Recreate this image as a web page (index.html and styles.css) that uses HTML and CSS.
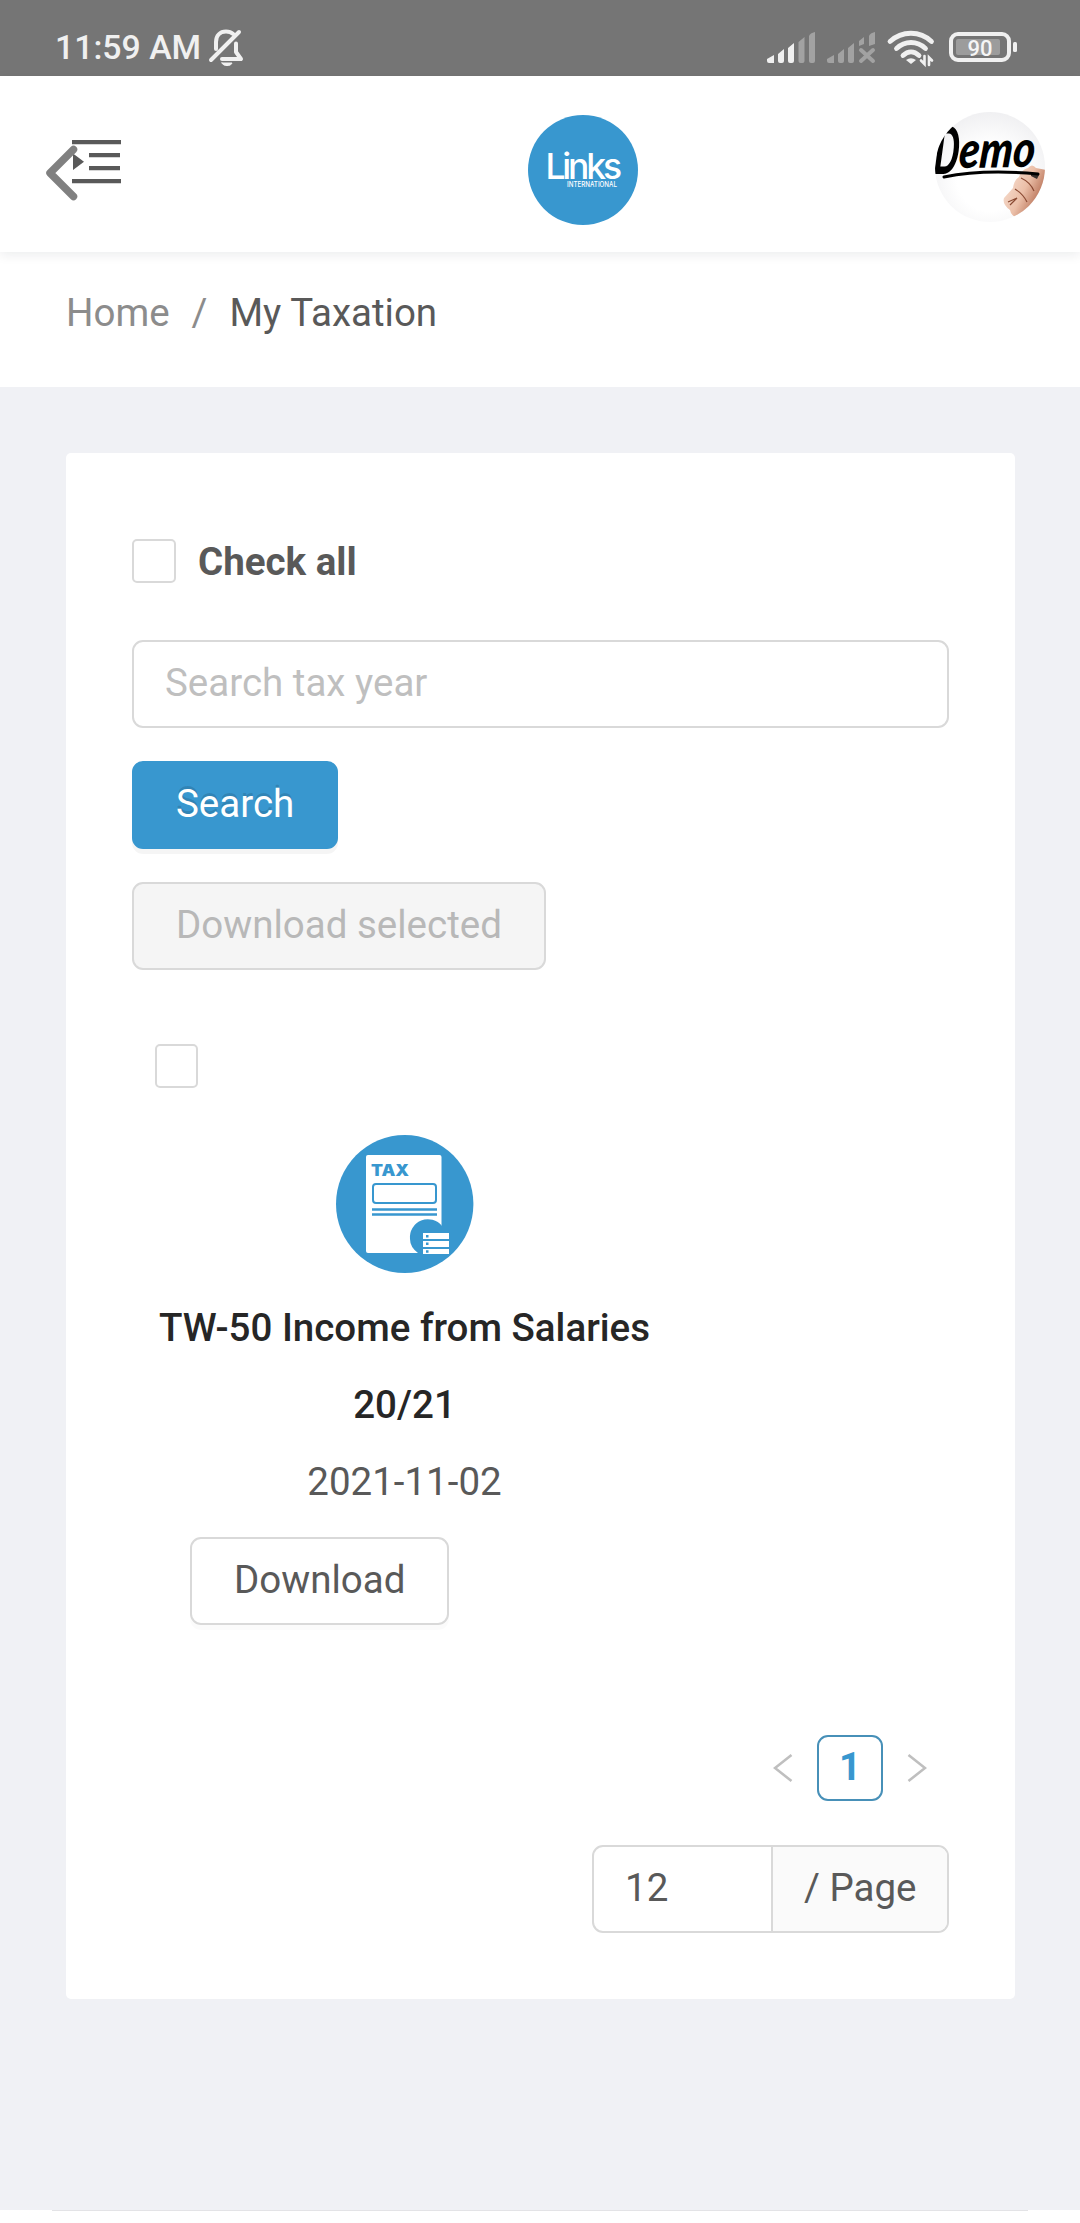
FILE: index.html
```html
<!DOCTYPE html>
<html lang="en">
<head>
<meta charset="utf-8">
<title>My Taxation</title>
<link rel="stylesheet" href="styles.css">
</head>
<body>
<div class="status-bar">
  <span class="clock">11:59 AM</span>
  <svg class="bell" width="36" height="40" viewBox="0 0 36 40" fill="none" stroke="#f0f0f0" stroke-width="4" stroke-linecap="round" stroke-linejoin="round">
    <path d="M8 21V14C8 7.500 12 3.500 18 3.500C21 3.500 23.500 4.500 25.200 6M3 32L31 4M28 15.500V24L33 31H14"/>
    <path d="M14 35H24C23 38.500 15 38.500 14 35Z" fill="#f0f0f0" stroke-width="1"/>
  </svg>
  <svg class="signals" width="252" height="40" viewBox="765 28 252 40">
    <g fill="#f0f0f0">
      <path d="M767 59l7-4v8h-5q-2 0-2-2zM778 54l6-5v12q0 2-2 2h-2q-2 0-2-2zM788 48l6-5v18q0 2-2 2h-2q-2 0-2-2z"/>
    </g>
    <g fill="#a2a2a2">
      <path d="M798.500 42l6-5v24q0 2-2 2h-2q-2 0-2-2zM809 36q1-3 6-4v29q0 2-2 2h-2q-2 0-2-2z"/>
      <path d="M827 59l7-4v8h-5q-2 0-2-2zM838 54l6-5v12q0 2-2 2h-2q-2 0-2-2zM848 48l6-5v18q0 2-2 2h-2q-2 0-2-2zM859 41l5-4v7l-5 2zM869 36q1-3 6-4v12l-6 2z"/>
      <path d="M861 50l12 11M873 50l-12 11" stroke="#a2a2a2" stroke-width="4" stroke-linecap="round"/>
    </g>
    <g fill="none" stroke="#f0f0f0" stroke-width="4.800" stroke-linecap="round">
      <path d="M890 41.500C902 30.500 920 30.500 931.500 41.500M896.500 48.500C905 40.500 917 40.500 925.500 48.500M903 55.500C908 50.700 914 50.700 919 55.500"/>
      <path d="M906 60Q911 56.500 916 60L911 64Z" fill="#f0f0f0" stroke="none"/>
      <path d="M924.500 56v8l-3.500-3.500M929 65v-7.500l3 3" stroke-width="2.600"/>
    </g>
    <rect x="951" y="34" width="58" height="26" rx="7" fill="none" stroke="#f0f0f0" stroke-width="4"/>
    <rect x="956" y="39" width="44" height="16" rx="2" fill="#9c9c9c"/>
    <rect x="1013" y="42" width="4" height="10" rx="1.500" fill="#f0f0f0"/>
    <text class="battery-level" x="980" y="55.500" text-anchor="middle">90</text>
  </svg>
</div>

<header class="header">
  <svg class="menu-icon" width="78" height="64" viewBox="44 138 78 64">
    <path d="M72 140h49v4.300H72zM89 153h31v4.300H89zM89 166h31v4.300H89zM72 179h49v4.300H72zM73 153.500l11 8.200-11 8.300z" fill="#595959"/>
    <path d="M73.500 149.500L50 173l23.500 23.500" fill="none" stroke="#808080" stroke-width="7.500" stroke-linecap="round" stroke-linejoin="round"/>
  </svg>
  <svg class="logo" width="110" height="110" viewBox="528 115 110 110">
    <circle cx="583" cy="170" r="55" fill="#3897cf"/>
    <text class="logo-name" x="545.500" y="179">Links</text>
    <text class="logo-sub" x="567" y="187" textLength="50" lengthAdjust="spacingAndGlyphs">INTERNATIONAL</text>
  </svg>
  <svg class="avatar" width="110" height="110" viewBox="0 0 110 110">
    <defs>
      <radialGradient id="paper" cx=".5" cy=".6" r=".6"><stop offset=".5" stop-color="#fff"/><stop offset="1" stop-color="#f0f0f2"/></radialGradient>
      <linearGradient id="skin" x1="0" y1="0" x2="1" y2=".6"><stop offset="0" stop-color="#fbe9de"/><stop offset=".55" stop-color="#ebbfa8"/><stop offset="1" stop-color="#a85a3e"/></linearGradient>
      <clipPath id="round"><circle cx="55" cy="55" r="55"/></clipPath>
    </defs>
    <g clip-path="url(#round)">
      <rect width="110" height="110" fill="url(#paper)"/>
      <path d="M93 56Q97 51 101 56L112 58V88L84 107Q76 104 75 98Q67 92 69 86L78 76Q79 68 84 65Q86 58 93 56Z" fill="url(#skin)"/>
      <path d="M73 90l9-4-7 7M86 66q9 4 13 13M80 77q8 5 12 13" fill="none" stroke="#8a4a33" stroke-width="1.200"/>
      <path d="M96 61l8 2-2 4-6-3z" fill="#38302d"/>
      <path d="M9 65Q48 57 103 62" fill="none" stroke="#000" stroke-width="3" stroke-linecap="round"/>
      <text class="demo-initial" transform="translate(-2 62) skewX(-4)" textLength="25" lengthAdjust="spacingAndGlyphs">D</text>
      <text class="demo-rest" transform="translate(23 56) rotate(-1) skewX(-6)" textLength="76" lengthAdjust="spacingAndGlyphs">emo</text>
    </g>
  </svg>
</header>

<nav class="breadcrumb">
  <span>Home</span><span class="separator">/</span><span class="current">My Taxation</span>
</nav>

<main class="content">
  <section class="card">
    <label class="check-all"><span class="checkbox"></span>Check all</label>
    <div class="search-input">Search tax year</div>
    <div class="btn btn-primary">Search</div>
    <div class="btn btn-disabled">Download selected</div>

    <article class="item">
      <span class="checkbox"></span>
      <svg class="tax-icon" width="138" height="138" viewBox="0 0 138 138">
        <ellipse cx="68.700" cy="69" rx="68.700" ry="69" fill="#3897cf"/>
        <rect x="30" y="20" width="75.500" height="98" rx="2" fill="#fff"/>
        <text class="tax-label" x="35" y="41" textLength="38" lengthAdjust="spacingAndGlyphs">TAX</text>
        <rect x="37" y="49" width="63" height="19" rx="3" fill="none" stroke="#3897cf" stroke-width="2"/>
        <path d="M36 74.500h65M36 79.500h65" stroke="#3897cf" stroke-width="2.400"/>
        <path d="M82 118Q74 112 74 104A18 18 0 0 1 106 91V119Z" fill="#3897cf"/>
        <path d="M87 98h26v6H87zM87 106h26v6H87zM87 114h26v5H87z" fill="#fff"/>
        <path d="M90 100h2.500v2.500H90zM90 107.500h2.500v2.500H90zM90 115.200h2.500v2.500H90z" fill="#3897cf"/>
      </svg>
      <div class="item-title">TW-50 Income from Salaries</div>
      <div class="item-year">20/21</div>
      <div class="item-date">2021-11-02</div>
      <div class="btn btn-download">Download</div>
    </article>

    <div class="pagination">
      <svg width="20" height="30" viewBox="0 0 20 30"><path d="M18.500 2L2 15l16.500 13" fill="none" stroke="#bfbfbf" stroke-width="2.600"/></svg>
      <span class="page-number">1</span>
      <svg width="20" height="30" viewBox="0 0 20 30"><path d="M1.500 2L18 15L1.500 28" fill="none" stroke="#bfbfbf" stroke-width="2.600"/></svg>
    </div>
    <div class="page-size">
      <span class="size-value">12</span><span class="size-unit">/ Page</span>
    </div>
  </section>
</main>
<footer class="home-edge"></footer>
</body>
</html>
```
FILE: styles.css
```css
* { box-sizing: border-box; }
body {
  margin: 0;
  height: 2223px;
  display: flex;
  flex-direction: column;
  background: #fff;
  color: #595959;
  font-family: Roboto, "Liberation Sans", sans-serif;
  font-size: 38.5px;
  line-height: 60px;
  white-space: nowrap;
  overflow: hidden;
}
svg { display: block; flex: none; }

.status-bar {
  flex: none;
  height: 76px;
  display: flex;
  align-items: flex-start;
  padding: 28px 63px 0 55px;
  background: #757575;
}
.clock { color: #f0f0f0; font-size: 33.8px; line-height: 40px; font-weight: 500; }
.bell { margin-left: 7px; }
.signals { margin-left: auto; }
.battery-level { font-size: 22px; font-weight: 500; fill: #f5f5f5; }

.header {
  flex: none;
  height: 176px;
  display: flex;
  justify-content: space-between;
  align-items: flex-start;
  padding: 36px 35px 0 44px;
  box-shadow: 0 3px 11px rgba(0, 21, 41, .08);
}
.menu-icon { margin-top: 26px; }
.logo { margin: 3px 0 0 109px; }
.logo-name { font: 500 35.5px Inter, sans-serif; letter-spacing: -3.2px; fill: #fff; }
.logo-sub { font: 500 7px Inter, sans-serif; fill: #fff; }
.demo-initial, .demo-rest { font-family: Lato, sans-serif; font-weight: 900; font-style: italic; fill: #000; }
.demo-initial { font-size: 66px; }
.demo-rest { font-size: 51px; }

.breadcrumb {
  flex: none;
  height: 135px;
  display: flex;
  padding: 31px 66px 0;
  color: #8c8c8c;
}
.separator { margin: 0 22px; }
.current { color: #595959; }

.content { flex: none; height: 1823px; padding: 66px 65px 0 66px; background: #f0f1f5; }
.card {
  height: 1546px;
  display: flex;
  flex-direction: column;
  align-items: flex-start;
  padding: 79px 66px 66px;
  background: #fff;
  border-radius: 5px;
}
.checkbox {
  flex: none;
  width: 44px;
  height: 44px;
  border: 2px solid #d9d9d9;
  border-radius: 5px;
  background: #fff;
}
.check-all { display: flex; align-items: center; gap: 22px; height: 60px; font-weight: 700; }
.check-all .checkbox { margin-top: -2px; }
.search-input {
  align-self: stretch;
  height: 88px;
  margin: 48px 0 33px;
  padding: 11px 31px;
  border: 2px solid #d9d9d9;
  border-radius: 11px;
  color: #bfbfbf;
}
.btn {
  height: 88px;
  padding: 11px 42px;
  border: 2px solid #d9d9d9;
  border-radius: 11px;
}
.btn-primary {
  margin-bottom: 33px;
  border-color: #3897cf;
  background: #3897cf;
  color: #fff;
  text-shadow: 0 -3px 0 rgba(0, 0, 0, .12);
  box-shadow: 0 5px 0 rgba(0, 0, 0, .04);
}
.btn-disabled { background: #f5f5f5; color: #b8b8b8; }

.item {
  width: 501px;
  margin: 74px 0 0 22px;
  display: flex;
  flex-direction: column;
  align-items: center;
}
.item > .checkbox { align-self: flex-start; width: 43px; }
.tax-icon { margin-top: 47px; }
.tax-label { font: 900 16px Inter, sans-serif; fill: #3897cf; }
.item-title, .item-year { color: #262626; font-weight: 500; }
.item-title { margin-top: 25px; }
.item-year, .item-date { margin-top: 17px; }
.btn-download { align-self: flex-start; margin: 25px 0 0 36px; box-shadow: 0 5px 0 rgba(0, 0, 0, .016); }
.item > .checkbox { margin-left: 1px; }

.pagination {
  align-self: flex-end;
  display: flex;
  align-items: center;
  gap: 24px;
  margin: 110px 22px 44px 0;
}
.page-number {
  width: 66px;
  height: 66px;
  border: 2px solid #4790b8;
  border-radius: 11px;
  color: #3897cf;
  font-weight: 700;
  line-height: 59px;
  text-align: center;
}
.page-size {
  align-self: flex-end;
  display: flex;
  width: 357px;
  height: 88px;
  border: 2px solid #d9d9d9;
  border-radius: 11px;
  overflow: hidden;
  line-height: 82px;
}
.size-value { flex: 1; padding-left: 31px; }
.size-unit { width: 176px; padding-left: 31px; border-left: 2px solid #d9d9d9; background: #fafafa; }

.home-edge { flex: none; height: 13px; margin: 0 52px; border-top: 1px solid #e3e3e6; }
```
